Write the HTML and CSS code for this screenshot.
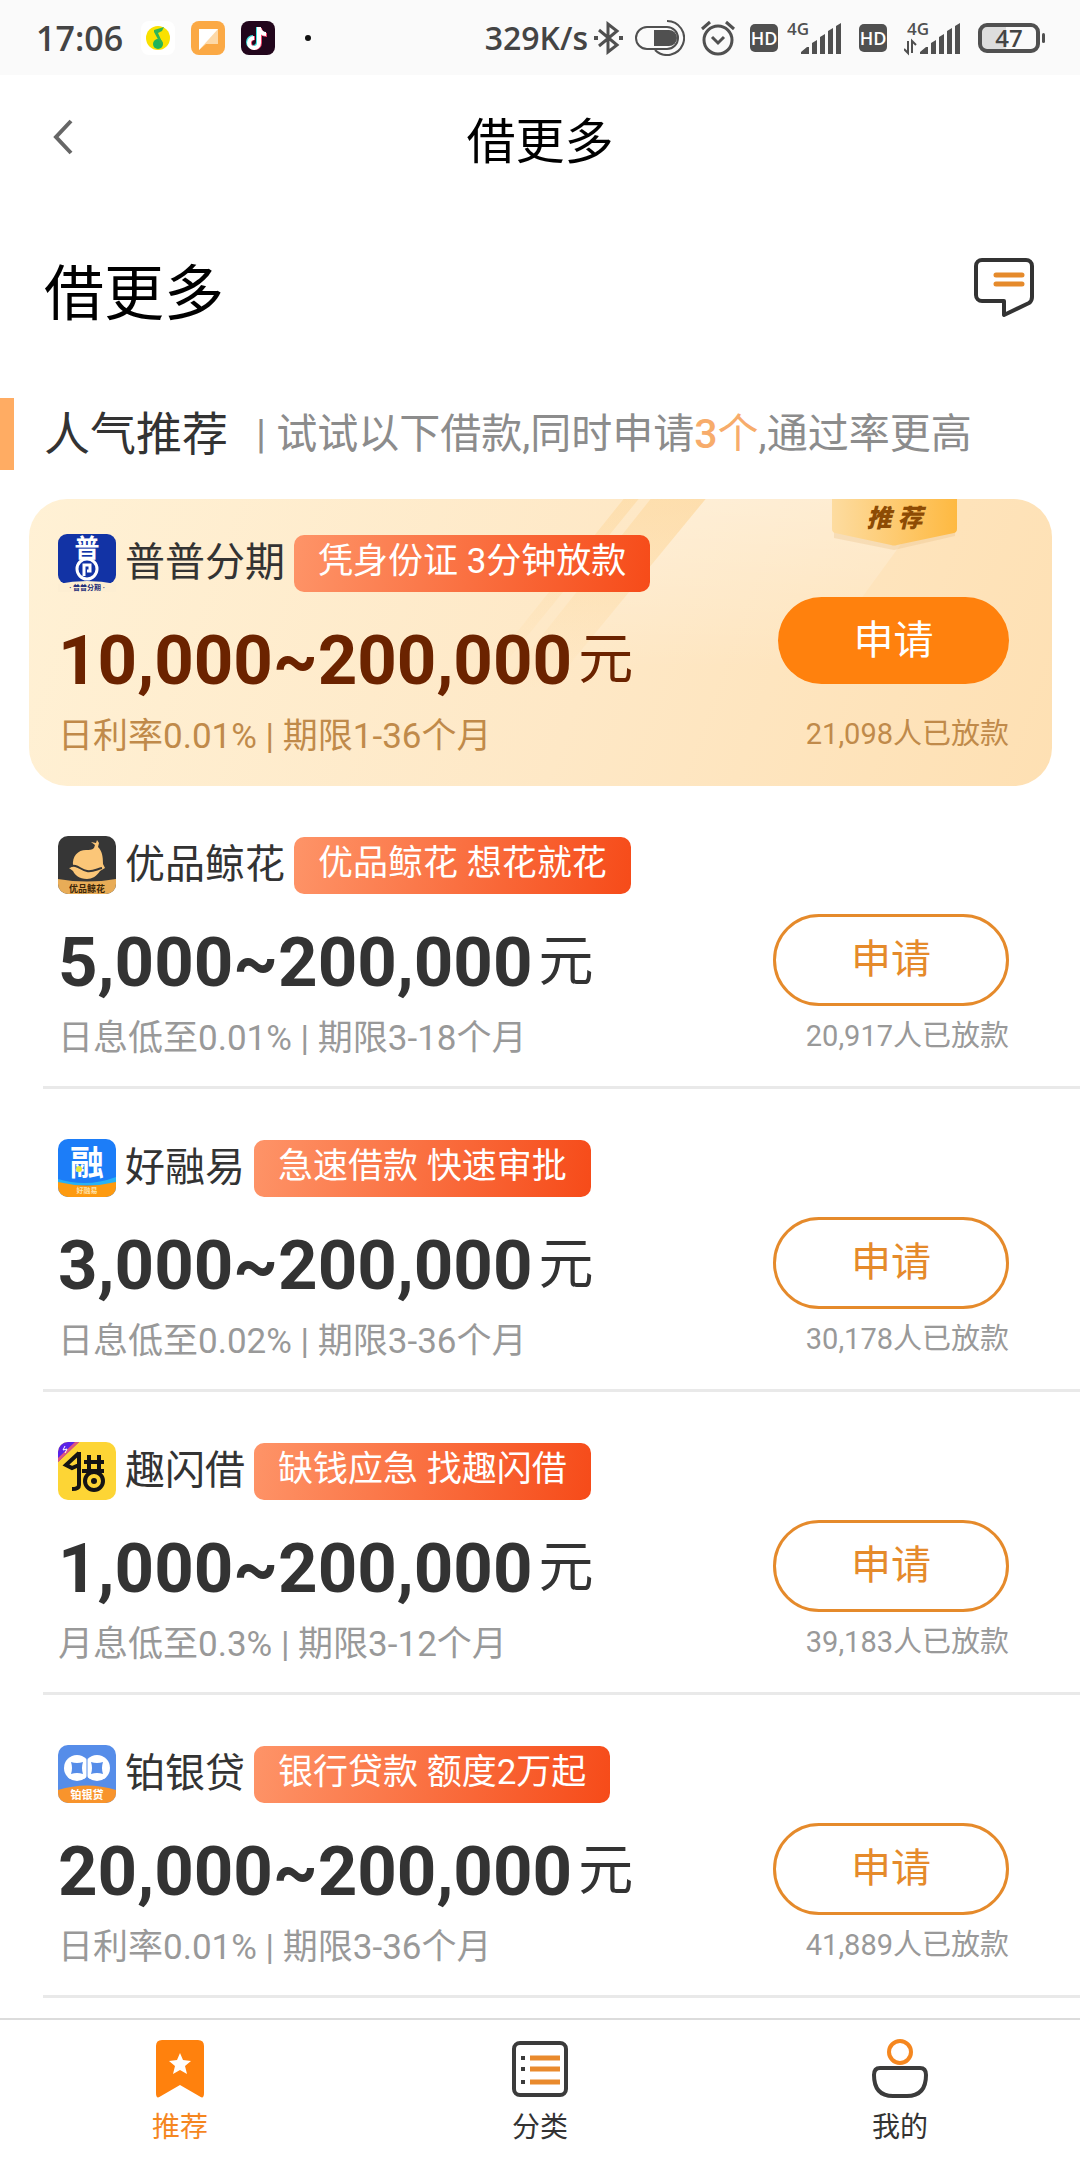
FILE: index.html
```html
<!DOCTYPE html>
<html lang="zh-CN">
<head>
    <meta charset="UTF-8">
    <meta name="viewport" content="width=device-width, initial-scale=1.0">
    <title>借更多</title>
    <link rel="stylesheet" href="styles.css">
</head>
<body>
    <!-- Status bar -->
    <div class="status-bar">
        <span class="clock">17:06</span>
        <div class="status-apps">
            <svg width="34" height="34" viewBox="0 0 34 34">
                <rect width="34" height="34" rx="8" fill="#fff"/>
                <circle cx="17" cy="17" r="12" fill="#fae100"/>
                <circle cx="17" cy="23" r="5" fill="#1fb45a"/>
                <path d="M13 9l10-3-2 4-4 2 5 11-2 1-7-13z" fill="#2fb457"/>
            </svg>
            <svg width="34" height="34" viewBox="0 0 34 34">
                <rect width="34" height="34" rx="8" fill="#fba945"/>
                <path d="M8 8h19v15H15l-7 6z" fill="#fdd9a8"/>
                <path d="M8 8h19L8 29z" fill="#fff"/>
            </svg>
            <svg width="34" height="34" viewBox="0 0 34 34">
                <rect width="34" height="34" rx="8" fill="#22061c"/>
                <g fill="none" stroke-width="4">
                    <path d="M17 6v15a5 5 0 1 1-5-5M17 7c1 4 4 6 7 6" stroke="#3ce0de"/>
                    <path d="M19 7v15a5 5 0 1 1-5-5M19 8c1 4 4 6 7 6" stroke="#f4436b"/>
                    <path d="M18 6v16a5 5 0 1 1-5-5M18 7c1 4 4 6 7 6" stroke="#fff"/>
                </g>
            </svg>
        </div>
        <span class="status-dot"></span>

        <div class="status-right">
            <span class="net-speed">329K/s</span>
            <svg width="30" height="34" viewBox="0 0 30 34" fill="none" stroke="#505050" stroke-width="3">
                <path d="M5 9l18 15-9 7V3l9 7L5 25"/>
                <path d="M0 17h4M25 17h4" stroke-width="4"/>
            </svg>
            <svg class="icon-toggle" width="50" height="36" viewBox="0 0 50 36">
                <rect x="1" y="7" width="42" height="22" rx="11" fill="none" stroke="#505050" stroke-width="2"/>
                <path d="M19 10h15a8 8 0 0 1 0 16H19z" fill="#505050"/>
                <path d="M32 1a17 17 0 1 1-12 29" fill="none" stroke="#505050" stroke-width="2"/>
            </svg>
            <svg class="icon-alarm" width="36" height="36" viewBox="0 0 36 36" fill="none" stroke="#505050" stroke-width="3">
                <circle cx="18" cy="20" r="14"/>
                <path d="M12 17l6 6 6-6M2 9l8-7M34 9l-8-7"/>
            </svg>
            <span class="hd">HD</span>
            <svg class="icon-signal" width="56" height="40" viewBox="0 -4 56 40" fill="#505050">
                <text class="net-type" x="0" y="13">4G</text>
                <path d="M14 32v-2l6-5h2v7zM25 21l5-3v14h-5zM33 15l5-3v20h-5zM41 9l5-3v26h-5zM49 4l5-3v31h-5z"/>
            </svg>
            <span class="hd">HD</span>
            <svg class="icon-signal" width="58" height="40" viewBox="0 -4 58 40" fill="#505050">
                <text class="net-type" x="3" y="13">4G</text>
                <path d="M4 19v12l-4-4M8 31V19l4 4" fill="none" stroke="#505050" stroke-width="2"/>
                <path d="M16 32v-2l6-5h2v7zM27 21l5-3v14h-5zM35 15l5-3v20h-5zM43 9l5-3v26h-5zM51 4l5-3v31h-5z"/>
            </svg>
            <span class="battery">47</span>
        </div>
    </div>

    <header class="nav-bar">
        <button class="back" aria-label="返回">
            <svg width="20" height="36" viewBox="0 0 20 36" fill="none" stroke="#666" stroke-width="4">
                <path d="M18 2L3 18l15 16"/>
            </svg>
        </button>
        <div class="nav-title">借更多</div>
    </header>

    <main>
        <div class="page-head">
            <h1>借更多</h1>
            <button class="message" aria-label="消息">
                <svg width="60" height="62" viewBox="0 0 60 62" fill="none">
                    <path d="M8 3h44a6 6 0 0 1 6 6v31q0 4-3 6L30 58V44H8a6 6 0 0 1-6-6V9a6 6 0 0 1 6-6z" stroke="#333" stroke-width="4" stroke-linejoin="round"/>
                    <path d="M22 18h26M22 27h26" stroke="#e58a2b" stroke-width="5" stroke-linecap="round"/>
                </svg>
            </button>
        </div>

        <div class="section-head">
            <h2>人气推荐</h2>
            <p>| 试试以下借款,同时申请<span class="hl"><b>3</b>个</span>,通过率更高</p>
        </div>

        <section class="loan featured">
            <svg class="stripes" viewBox="0 0 1022 287" preserveAspectRatio="none">
                <defs>
                    <linearGradient id="stripe" x1="0" y1="0" x2="0" y2="1">
                        <stop offset="0" stop-color="#fdd391" stop-opacity=".45"/>
                        <stop offset="1" stop-color="#fdd391" stop-opacity="0"/>
                    </linearGradient>
                    <linearGradient id="shine" x1="0" y1="0" x2="0" y2="1">
                        <stop offset="0" stop-color="#fff" stop-opacity=".3"/>
                        <stop offset="1" stop-color="#fff" stop-opacity="0"/>
                    </linearGradient>
                </defs>
                <path d="M594 0h15L463 180h-13z" fill="url(#stripe)"/>
                <path d="M621 0h55L520 190h-50z" fill="url(#stripe)"/>
                <path d="M676 0h228L780 170H536z" fill="url(#shine)"/>
            </svg>
            <span class="ribbon">
                <svg width="125" height="54" viewBox="0 0 125 54">
                    <defs>
                        <linearGradient id="ribbon-fill">
                            <stop offset="0" stop-color="#fddca0"/>
                            <stop offset="1" stop-color="#feb941"/>
                        </linearGradient>
                    </defs>
                    <path d="M2 2h121v35L62 51 2 39z" fill="#e9bd80" opacity=".3"/>
                    <path d="M0 0h125v30q0 3-3 4L65 46q-3 1-6 0L3 34q-3-1-3-4z" fill="url(#ribbon-fill)"/>
                </svg>
                <em>推 荐</em>
            </span>
            <div class="loan-main">
                <div class="loan-top">
                    <svg class="logo" viewBox="0 0 58 58">
                        <rect width="58" height="50" rx="9" fill="#1233a5"/>
                        <path d="M0 50q29-6 58 0v8H0z" fill="#fdeed2"/>
                        <text class="logo-char" x="29" y="23" font-size="25" fill="#fff">普</text>
                        <circle cx="29" cy="35" r="10" fill="#1233a5" stroke="#fff" stroke-width="3"/>
                        <path d="M26 42V31h6v6h-3" fill="none" stroke="#fff" stroke-width="3"/>
                        <text class="logo-char" x="29" y="56" font-size="7" fill="#1b2b78">· 普普分期 ·</text>
                    </svg>
                    <h3>普普分期</h3>
                    <span class="tag">凭身份证 3分钟放款</span>
                </div>
                <div class="amount">10,000~200,000<small>元</small></div>
                <div class="terms">日利率0.01% | 期限1-36个月</div>
            </div>
            <div class="loan-side">
                <button class="apply">申请</button>
                <span class="count">21,098人已放款</span>
            </div>
        </section>

        <section class="loan">
            <div class="loan-main">
                <div class="loan-top">
                    <svg class="logo" viewBox="0 0 58 58">
                        <rect width="58" height="58" rx="10" fill="#363636"/>
                        <path d="M0 43q29 5 58 0v5a10 10 0 0 1-10 10H10A10 10 0 0 1 0 48z" fill="#e8ac57"/>
                        <path d="M15 30c-1-10 5-16 13-16 3 0 6 0 8-2l1-3-4-3 5 1 1-3 2 3-1 4c4 4 5 9 5 17l2 4-5 3c-3 5-8 8-13 8-8 0-12-4-14-8l-4-3z" fill="#fbc678"/>
                        <path d="M11 31c8-4 11 3 18 4 6 1 10-2 15-3" fill="none" stroke="#363636" stroke-width="2"/>
                        <text class="logo-char" x="29" y="56" font-size="9" fill="#3b2507">优品鲸花</text>
                    </svg>
                    <h3>优品鲸花</h3>
                    <span class="tag">优品鲸花 想花就花</span>
                </div>
                <div class="amount">5,000~200,000<small>元</small></div>
                <div class="terms">日息低至0.01% | 期限3-18个月</div>
            </div>
            <div class="loan-side">
                <button class="apply">申请</button>
                <span class="count">20,917人已放款</span>
            </div>
        </section>

        <section class="loan">
            <div class="loan-main">
                <div class="loan-top">
                    <svg class="logo" viewBox="0 0 58 58">
                        <rect width="58" height="58" rx="10" fill="#1c7df8"/>
                        <path d="M0 40q29 9 58-2v8H0z" fill="#27b2f5"/>
                        <path d="M0 43q29 7 58 0v5a10 10 0 0 1-10 10H10A10 10 0 0 1 0 48z" fill="#fd9a10"/>
                        <text class="logo-char" x="29" y="36" font-size="34" fill="#fff">融</text>
                        <circle cx="21" cy="30" r="3" fill="#e5e83c"/>
                        <text class="logo-char" x="29" y="54" font-size="7" fill="#ffe2a8">好融易</text>
                    </svg>
                    <h3>好融易</h3>
                    <span class="tag">急速借款 快速审批</span>
                </div>
                <div class="amount">3,000~200,000<small>元</small></div>
                <div class="terms">日息低至0.02% | 期限3-36个月</div>
            </div>
            <div class="loan-side">
                <button class="apply">申请</button>
                <span class="count">30,178人已放款</span>
            </div>
        </section>

        <section class="loan">
            <div class="loan-main">
                <div class="loan-top">
                    <svg class="logo" viewBox="0 0 58 58">
                        <rect width="58" height="58" rx="10" fill="#fdd535"/>
                        <path d="M10 0h11L0 20V10A10 10 0 0 1 10 0z" fill="#5a22e8"/>
                        <path d="M21 0L0 20v-4L17 0z" fill="#e0567c"/>
                        <path d="M7 4l-2 4 4-1-2 4" fill="none" stroke="#fff" stroke-width="1"/>
                        <g fill="none" stroke="#141414" stroke-width="4">
                            <path d="M21 10v33q0 4-7 4M21 11L8 23l6 3 7-3M26 20h20M24 29h22M31 13v16M41 13v16"/>
                            <circle cx="36" cy="39" r="9"/>
                        </g>
                        <circle cx="36" cy="39" r="3" fill="#141414"/>
                    </svg>
                    <h3>趣闪借</h3>
                    <span class="tag">缺钱应急 找趣闪借</span>
                </div>
                <div class="amount">1,000~200,000<small>元</small></div>
                <div class="terms">月息低至0.3% | 期限3-12个月</div>
            </div>
            <div class="loan-side">
                <button class="apply">申请</button>
                <span class="count">39,183人已放款</span>
            </div>
        </section>

        <section class="loan">
            <div class="loan-main">
                <div class="loan-top">
                    <svg class="logo" viewBox="0 0 58 58">
                        <rect width="58" height="58" rx="10" fill="#568de9"/>
                        <path d="M0 45q29-9 58 0v3a10 10 0 0 1-10 10H10A10 10 0 0 1 0 48z" fill="#f8942c"/>
                        <circle cx="19" cy="23" r="13" fill="#fff"/>
                        <circle cx="39" cy="23" r="13" fill="#fff"/>
                        <path d="M13 17q6 2 12 0-2 6 0 12-6-2-12 0 2-6 0-12zM33 17q6 2 12 0-2 6 0 12-6-2-12 0 2-6 0-12z" fill="#568de9"/>
                        <path d="M29 14v18" stroke="#568de9" stroke-width="1"/>
                        <text class="logo-char" x="29" y="54" font-size="11" fill="#fff">铂银贷</text>
                    </svg>
                    <h3>铂银贷</h3>
                    <span class="tag">银行贷款 额度2万起</span>
                </div>
                <div class="amount">20,000~200,000<small>元</small></div>
                <div class="terms">日利率0.01% | 期限3-36个月</div>
            </div>
            <div class="loan-side">
                <button class="apply">申请</button>
                <span class="count">41,889人已放款</span>
            </div>
        </section>
    </main>

    <nav class="tab-bar">
        <a href="#recommend" class="active">
            <svg width="60" height="64" viewBox="0 0 60 64">
                <path d="M12 3h36q6 0 6 6v47q0 7-5 3L30 48 11 59q-5 4-5-3V9q0-6 6-6z" fill="#ff810d"/>
                <path d="M30 16l3 7 8 1-6 5 2 8-7-4-7 4 2-8-6-5 8-1z" fill="#fff"/>
            </svg>
            推荐
        </a>
        <a href="#category">
            <svg width="60" height="64" viewBox="0 0 60 64" fill="none">
                <rect x="4" y="6" width="52" height="52" rx="6" stroke="#3b3b3b" stroke-width="4"/>
                <path d="M20 21h30M20 32h30M20 45h30" stroke="#e98a2d" stroke-width="5"/>
                <path d="M11 21h4M11 32h4M11 45h4" stroke="#3b3b3b" stroke-width="4"/>
            </svg>
            分类
        </a>
        <a href="#mine">
            <svg width="60" height="64" viewBox="0 0 60 64" fill="none" stroke-width="4">
                <circle cx="30" cy="15" r="11" stroke="#f5871f"/>
                <path d="M10 31h40q6 0 6 7 0 21-19 21H23Q4 59 4 38q0-7 6-7z" stroke="#3b3b3b"/>
            </svg>
            我的
        </a>
    </nav>
</body>
</html>
```

FILE: styles.css
```css
* {
    box-sizing: border-box;
}
body {
    margin: 0;
    min-height: 100vh;
    display: flex;
    flex-direction: column;
    font-family: Roboto, "Noto Sans CJK SC", sans-serif;
    color: #333;
    background-color: #fff;
}
h1, h2, h3, p {
    margin: 0;
    font-weight: normal;
}
button {
    padding: 0;
    border: none;
    background: none;
    font-family: inherit;
    cursor: pointer;
}
svg {
    display: block;
    flex: none;
}

/* status bar */
.status-bar {
    display: flex;
    align-items: center;
    height: 75px;
    padding: 0 40px 0 36px;
    background-color: #fafafa;
    color: #444;
    font-family: "Open Sans", "Noto Sans", sans-serif;
    font-weight: 600;
}
.clock {
    width: 105px;
    font-size: 34px;
}
.status-apps {
    display: flex;
    gap: 16px;
}
.status-dot {
    width: 6px;
    height: 6px;
    margin-left: 30px;
    border-radius: 50%;
    background-color: #111;
}
.status-right {
    display: flex;
    align-items: center;
    margin-left: auto;
}
.net-speed {
    margin-right: 6px;
    font-size: 32px;
}
.icon-toggle {
    margin-left: 11px;
}
.icon-alarm {
    margin: 0 14px 0 15px;
}
.hd {
    width: 28px;
    height: 28px;
    border-radius: 5px;
    background-color: #505050;
    color: #fff;
    font-size: 18px;
    line-height: 28px;
    text-align: center;
}
.icon-signal {
    margin: 0 16px 0 9px;
}
.icon-signal:last-of-type {
    margin-left: 17px;
}
.net-type {
    font-size: 17px;
}
.battery {
    position: relative;
    width: 62px;
    height: 30px;
    border: 4px solid #505050;
    border-radius: 9px;
    background: linear-gradient(90deg, #ddd 45%, #fafafa 45%);
    font-size: 24px;
    line-height: 22px;
    text-align: center;
}
.battery::after {
    content: "";
    position: absolute;
    top: 6px;
    right: -9px;
    width: 3px;
    height: 10px;
    border-radius: 2px;
    background-color: #505050;
}

/* header */
.nav-bar {
    display: grid;
    grid-template-columns: 120px 1fr 120px;
    align-items: center;
    height: 130px;
    padding-bottom: 6px;
}
.back {
    display: flex;
    align-items: center;
    height: 100%;
    padding-left: 53px;
}
.nav-title {
    color: #000;
    font-size: 49px;
    text-align: center;
}
main {
    flex: 1;
}
.page-head {
    display: flex;
    align-items: center;
    justify-content: space-between;
    height: 172px;
    padding: 0 46px 6px 44px;
}
.page-head h1 {
    color: #000;
    font-size: 60px;
}
.section-head {
    display: flex;
    align-items: center;
    height: 72px;
    margin-top: 21px;
    border-left: 14px solid #ffac63;
    padding: 0 0 8px 30px;
}
.section-head h2 {
    font-size: 46px;
}
.section-head p {
    margin-left: 28px;
    color: #8c8c8c;
    font-size: 41px;
}
.hl {
    color: #f7ac6b;
}
.hl b {
    font-weight: 500;
}

/* loan list */
.loan {
    display: flex;
    justify-content: space-between;
    margin-left: 43px;
    padding: 50px 71px 26px 15px;
    border-bottom: 3px solid #e9e9e9;
}
.loan-top {
    display: flex;
    align-items: center;
    height: 58px;
}
.logo {
    width: 58px;
    height: 58px;
}
.logo-char {
    font-weight: bold;
    text-anchor: middle;
}
.loan h3 {
    margin: 0 9px;
    font-size: 40px;
    line-height: 58px;
}
.tag {
    padding: 0 24px 4px;
    border-radius: 10px;
    background: linear-gradient(100deg, #fe9468, #f64b19);
    color: #fff;
    font-size: 35px;
    line-height: 53px;
}
.amount {
    display: flex;
    align-items: center;
    height: 84px;
    margin-top: 26px;
    font-size: 69px;
    font-weight: bold;
}
.amount small {
    margin-left: 6px;
    padding-bottom: 12px;
    font-family: "Noto Sans CJK SC", sans-serif;
    font-size: 55px;
    font-weight: normal;
}
.terms {
    margin-top: 14px;
    color: #999;
    font-size: 35px;
    line-height: 42px;
}
.loan-side {
    display: flex;
    flex-direction: column;
    align-items: flex-end;
    justify-content: flex-end;
    padding-bottom: 6px;
}
.apply {
    width: 236px;
    height: 92px;
    margin-bottom: 12px;
    padding-bottom: 8px;
    border: 3px solid #e58a2b;
    border-radius: 46px;
    color: #e58a2b;
    font-size: 40px;
}
.count {
    color: #999;
    font-size: 29px;
    line-height: 36px;
}

/* highlighted card */
.featured {
    position: relative;
    margin: 29px 28px 0 29px;
    padding: 35px 43px 28px 29px;
    border: none;
    border-radius: 38px;
    background: linear-gradient(110deg, #fff1d5, #fee8c6 55%, #fee0b3);
    overflow: hidden;
}
.featured .loan-main,
.featured .loan-side {
    position: relative;
}
.stripes {
    position: absolute;
    top: 0;
    left: 0;
    width: 100%;
    height: 100%;
}
.ribbon {
    position: absolute;
    top: 0;
    right: 95px;
}
.ribbon em {
    position: absolute;
    top: 0;
    left: 0;
    width: 100%;
    color: #8d4b04;
    font-size: 25px;
    font-weight: 900;
    line-height: 40px;
    text-align: center;
}
.featured .amount {
    color: #6b2300;
}
.featured .terms,
.featured .count {
    color: #c08a4a;
}
.featured .apply {
    width: 231px;
    height: 87px;
    margin-bottom: 32px;
    border: none;
    background-color: #ff810d;
    color: #fff;
}

/* bottom tabs */
.tab-bar {
    position: sticky;
    bottom: 0;
    display: flex;
    height: 142px;
    border-top: 2px solid #dcdcdc;
    background-color: #fff;
}
.tab-bar a {
    flex: 1;
    display: flex;
    flex-direction: column;
    align-items: center;
    padding-top: 17px;
    color: #333;
    font-size: 28px;
    line-height: 54px;
    text-decoration: none;
}
.tab-bar a.active {
    color: #f5861f;
}
```
